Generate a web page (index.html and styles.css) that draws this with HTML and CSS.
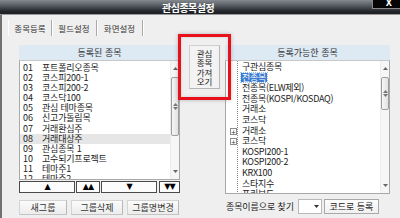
FILE: index.html
```html
<!DOCTYPE html>
<html lang="ko">
<head>
<meta charset="utf-8">
<title>관심종목설정</title>
<link rel="stylesheet" href="styles.css">
</head>
<body>
<div class="window">
  <div class="titlebar">
    <span class="title">관심종목설정</span>
    <span class="close">X</span>
  </div>
  <div class="frame">
    <div class="tabs">
      <span class="tab active">종목등록</span>
      <span class="tab">필드설정</span>
      <span class="tab">화면설정</span>
    </div>
    <div class="page">
      <div class="col left">
        <div class="hdr">등록된 종목</div>
        <div class="list lbox">
          <ul class="items">
            <li><span class="no">01</span>포트폴리오종목</li>
            <li><span class="no">02</span>코스피200-1</li>
            <li><span class="no">03</span>코스피200-2</li>
            <li><span class="no">04</span>코스닥100</li>
            <li><span class="no">05</span>관심 테마종목</li>
            <li><span class="no">06</span>신고가돌림목</li>
            <li><span class="no">07</span>거래환심주</li>
            <li class="sel"><span class="no">08</span>거래대상주</li>
            <li><span class="no">09</span>관심종목 1</li>
            <li><span class="no">10</span>고수되기프로젝트</li>
            <li><span class="no">11</span>테마주1</li>
            <li><span class="no">12</span>테마주2</li>
          </ul>
          <div class="sbar">
            <div class="sarrow"><svg width="5" height="3" viewBox="0 0 5 3"><path d="M0 3L2.5 0L5 3Z" fill="#666"/></svg></div>
            <div class="thumb lthumb"><svg width="5" height="7" viewBox="0 0 5 7"><path d="M0 3L2.5 0L5 3Z M0 4L2.5 7L5 4Z" fill="#777"/></svg></div>
            <div class="track"></div>
            <div class="sarrow"><svg width="5" height="3" viewBox="0 0 5 3"><path d="M0 0L2.5 3L5 0Z" fill="#666"/></svg></div>
          </div>
        </div>
        <div class="arrows">
          <button class="abtn w56">▲</button>
          <button class="abtn w24">▲▲</button>
          <button class="abtn w56">▼</button>
          <button class="abtn w21">▼▼</button>
        </div>
        <div class="actions">
          <button class="gbtn b48">새그룹</button>
          <button class="gbtn b52">그룹삭제</button>
          <button class="gbtn b52">그룹명변경</button>
        </div>
      </div>
      <div class="col mid">
        <button class="fetch">관심<br>종목<br>가져<br>오기</button>
        <div class="redbox"></div>
      </div>
      <div class="col right">
        <div class="hdr">등록가능한 종목</div>
        <div class="list rbox">
          <ul class="tree">
            <li>구관심종목</li>
            <li><span class="hl">전종목</span></li>
            <li>전종목(ELW제외)</li>
            <li>전종목(KOSPI/KOSDAQ)</li>
            <li>거래소</li>
            <li>코스닥</li>
            <li><span class="pbox">+</span>거래소</li>
            <li><span class="pbox">+</span>코스닥</li>
            <li>KOSPI200-1</li>
            <li>KOSPI200-2</li>
            <li>KRX100</li>
            <li>스타지수</li>
            <li>프리보드</li>
          </ul>
          <div class="sbar">
            <div class="sarrow"><svg width="5" height="3" viewBox="0 0 5 3"><path d="M0 3L2.5 0L5 3Z" fill="#666"/></svg></div>
            <div class="thumb rthumb"><svg width="5" height="7" viewBox="0 0 5 7"><path d="M0 3L2.5 0L5 3Z M0 4L2.5 7L5 4Z" fill="#777"/></svg></div>
            <div class="track"></div>
            <div class="sarrow"><svg width="5" height="3" viewBox="0 0 5 3"><path d="M0 0L2.5 3L5 0Z" fill="#666"/></svg></div>
          </div>
        </div>
        <div class="search">
          <span class="lbl">종목이름으로 찾기</span>
          <span class="combo"><span class="cbtn"><svg width="5" height="3" viewBox="0 0 5 3"><path d="M0 0L2.5 3L5 0Z" fill="#333"/></svg></span></span>
          <button class="cbtn2">코드로 등록</button>
        </div>
      </div>
    </div>
  </div>
</div>
</body>
</html>
```
FILE: styles.css
```css
* { box-sizing: border-box; margin: 0; padding: 0; }
html, body { width: 400px; height: 218px; overflow: hidden; }
body {
  font-family: "Noto Sans CJK KR", "Noto Sans", sans-serif;
  font-size: 9px;
  color: #222;
  background: #efefef;
}
button { font-family: inherit; font-size: 9px; color: #222; cursor: default; }
ul { list-style: none; }

.window { width: 400px; height: 218px; display: flex; flex-direction: column; }

.titlebar {
  height: 15px;
  flex: none;
  display: flex;
  align-items: flex-start;
  background: linear-gradient(#858990, #50545b 45%, #23262b 80%, #1c1e22);
  border-bottom: 1px solid #9a9a9a;
}
.title {
  margin-left: 162px;
  margin-top: 1px;
  color: #fff;
  font-weight: bold;
  font-size: 10px;
  line-height: 13px;
  letter-spacing: -0.5px;
}
.close {
  margin-left: auto;
  width: 28px;
  height: 9px;
  background: #050505;
  border-left: 1px solid #888;
  border-bottom: 1px solid #888;
  color: #fff;
  font-family: "DejaVu Sans", sans-serif;
  font-weight: bold;
  font-size: 8px;
  line-height: 8px;
  text-align: right;
  padding-right: 8px;
}

.frame {
  flex: 1;
  border-left: 2px solid #727272;
  display: flex;
  flex-direction: column;
}

.tabs {
  margin-top: 5px;
  padding-left: 6px;
  height: 16px;
  display: flex;
  flex: none;
}
.tab {
  display: flex;
  align-items: center;
  justify-content: center;
  height: 16px;
  border-right: 1px solid #a8a8a8;
  box-shadow: 1px 0 0 #fff;
  color: #333;
  font-size: 8.5px;
}
.tab:nth-child(1) { width: 44px; border-left: 1px solid #fff; }
.tab:nth-child(2) { width: 45px; }
.tab:nth-child(3) { width: 46px; }

.page {
  display: flex;
  padding: 9px 0 0 17px;
}
.col { display: flex; flex-direction: column; }
.left { width: 161px; }
.mid { width: 45px; position: relative; }
.right { width: 165px; }

.hdr {
  height: 15px;
  background: #dde9f3;
  color: #333;
  text-align: center;
  line-height: 15px;
  font-size: 9px;
}

.list {
  display: flex;
  background: #fff;
  border: 1px solid #a9a9a9;
  border-top-color: #c8c8c8;
  overflow: hidden;
}
.lbox { height: 120px; }
.rbox { height: 134px; }

.items { flex: 1; padding-top: 2px; }
.items li {
  height: 10.1px;
  line-height: 10.1px;
  white-space: nowrap;
  padding-left: 3px;
  letter-spacing: -0.2px;
}
.items li.sel { background: #e6e6e6; }
.no { display: inline-block; width: 19px; letter-spacing: 0; }

.sbar {
  width: 9px;
  flex: none;
  display: flex;
  flex-direction: column;
  background: #f6f6f6;
  border-left: 1px solid #ececec;
}
.sarrow {
  height: 15px;
  display: flex;
  align-items: center;
  justify-content: center;
  flex: none;
}
.thumb {
  flex: none;
  margin: 1px 0 0;
  border: 1px solid #9d9d9d;
  border-radius: 2px;
  background: linear-gradient(90deg, #f6f6f6, #e2e2e2);
  display: flex;
  align-items: center;
  justify-content: center;
}
.lthumb { height: 59px; }
.rthumb { height: 33px; }
.track { flex: 1; }

.arrows {
  display: flex;
  gap: 1px;
  margin-top: 1px;
}
.abtn {
  height: 12px;
  border: 1px solid #4a4a4a;
  background: #fcfcfc;
  font-family: "DejaVu Sans", sans-serif;
  font-size: 8px;
  line-height: 10px;
  color: #000;
  letter-spacing: -1px;
}
.w56 { width: 56px; }
.w24 { width: 24px; }
.w21 { width: 21px; margin-left: 1px; }

.actions {
  display: flex;
  gap: 4px;
  margin-top: 7px;
}
.gbtn {
  height: 15px;
  border: 1px solid #d4d4d4;
  border-right-color: #b8b8b8;
  border-bottom-color: #c4c4c4;
  background: linear-gradient(#fbfbfb, #ececec);
  color: #333;
  font-size: 9px;
}
.b48 { width: 48px; }
.b52 { width: 52px; }

.fetch {
  margin-left: 9px;
  width: 31px;
  height: 44px;
  border: 1px solid #cfcfcf;
  border-right-color: #b5b5b5;
  border-bottom-color: #b5b5b5;
  background: #f3f3f3;
  font-size: 8.5px;
  line-height: 9.3px;
  color: #222;
  padding-top: 1px;
}
.redbox {
  position: absolute;
  left: -2px;
  top: -11px;
  width: 53px;
  height: 66px;
  border: 3px solid #e8101a;
  box-shadow: 0 0 4px rgba(0,0,0,0.25), inset 0 0 3px rgba(0,0,0,0.15);
}

.tree {
  flex: 1;
  padding: 1px 0 0 16px;
  background: repeating-linear-gradient(to bottom, #8a8a8a 0 1px, transparent 1px 2px) no-repeat 11px 0 / 1px 100%;
}
.tree li {
  height: 10.6px;
  line-height: 10.6px;
  white-space: nowrap;
  letter-spacing: -0.3px;
  background: repeating-linear-gradient(to right, #8a8a8a 0 1px, transparent 1px 2px) no-repeat -5px 55% / 4px 1px;
}
.hl {
  display: inline-block;
  background: #3b7bd0;
  color: #fff;
  line-height: 9px;
  padding: 0 1px;
  margin-left: -1px;
  outline: 1px dotted #9cc4ee;
}
.pbox {
  display: inline-block;
  width: 7px;
  height: 7px;
  margin-left: -12px;
  margin-right: 5px;
  border: 1px solid #8c8c8c;
  background: #fff;
  font-family: "DejaVu Sans", sans-serif;
  font-size: 6px;
  line-height: 5px;
  text-align: center;
  color: #333;
  vertical-align: 0;
  letter-spacing: 0;
}

.search {
  display: flex;
  align-items: center;
  margin-top: 5px;
  height: 15px;
}
.lbl { padding-left: 1px; font-size: 9px; color: #222; white-space: nowrap; letter-spacing: -0.1px; }
.combo {
  margin-left: 4px;
  width: 24px;
  height: 15px;
  background: #fff;
  border: 1px solid #b9b9b9;
  display: flex;
  justify-content: flex-end;
  align-items: center;
}
.cbtn {
  width: 9px;
  height: 13px;
  display: flex;
  align-items: center;
  justify-content: center;
}
.cbtn2 {
  margin-left: 2px;
  width: 55px;
  height: 15px;
  border: 1px solid #a8a8a8;
  background: linear-gradient(#fdfdfd, #f0f0f0);
  font-size: 9px;
  color: #222;
}
```
